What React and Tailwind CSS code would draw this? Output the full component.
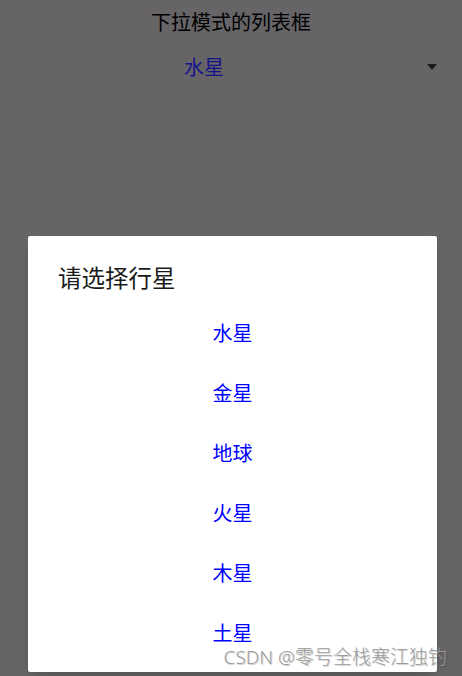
const PLANETS = ['水星', '金星', '地球', '火星', '木星', '土星']

export default function App() {
  return (
    <div
      className="relative w-[462px] h-[676px] overflow-hidden bg-[#666467]"
      style={{ fontFamily: '"Noto Sans CJK SC", "Noto Sans", sans-serif' }}
    >
      {/* page under the dim overlay */}
      <div className="flex flex-col">
        <div className="pt-[8px] h-[44px] text-center text-[20px] leading-[28px] text-black">下拉模式的列表框</div>
        <div className="relative flex items-center h-[46px]">
          <span className="pl-[184px] text-[20px] leading-[28px] text-[#15138a]">水星</span>
          <span className="ml-auto mr-[25px] w-0 h-0 border-l-[5px] border-r-[5px] border-t-[6px] border-l-transparent border-r-transparent border-t-[#1c1c1c]" />
        </div>
      </div>

      {/* dialog */}
      <div className="absolute top-[236px] left-[28px] w-[409px] h-[436px] bg-white rounded-[2px] shadow-lg overflow-hidden">
        <div className="pt-[26px] pb-[11px] pl-[30px] text-[23.5px] leading-[30px] text-[#1a1a1a]">请选择行星</div>
        <ul className="flex flex-col">
          {PLANETS.map((p) => (
            <li key={p} className="h-[60px] flex items-center justify-center text-[20px] text-[#0000ff]">
              {p}
            </li>
          ))}
        </ul>
      </div>

      <div
        className="absolute right-[15px] bottom-[7px] text-[19px] leading-[24px] font-light text-[#9c9c9c] [text-shadow:1px_1px_1px_rgba(0,0,0,0.2)]"
        style={{ fontFamily: '"Noto Sans", "Noto Sans CJK SC", sans-serif' }}
      >
        CSDN @零号全栈寒江独钓
      </div>
    </div>
  )
}
